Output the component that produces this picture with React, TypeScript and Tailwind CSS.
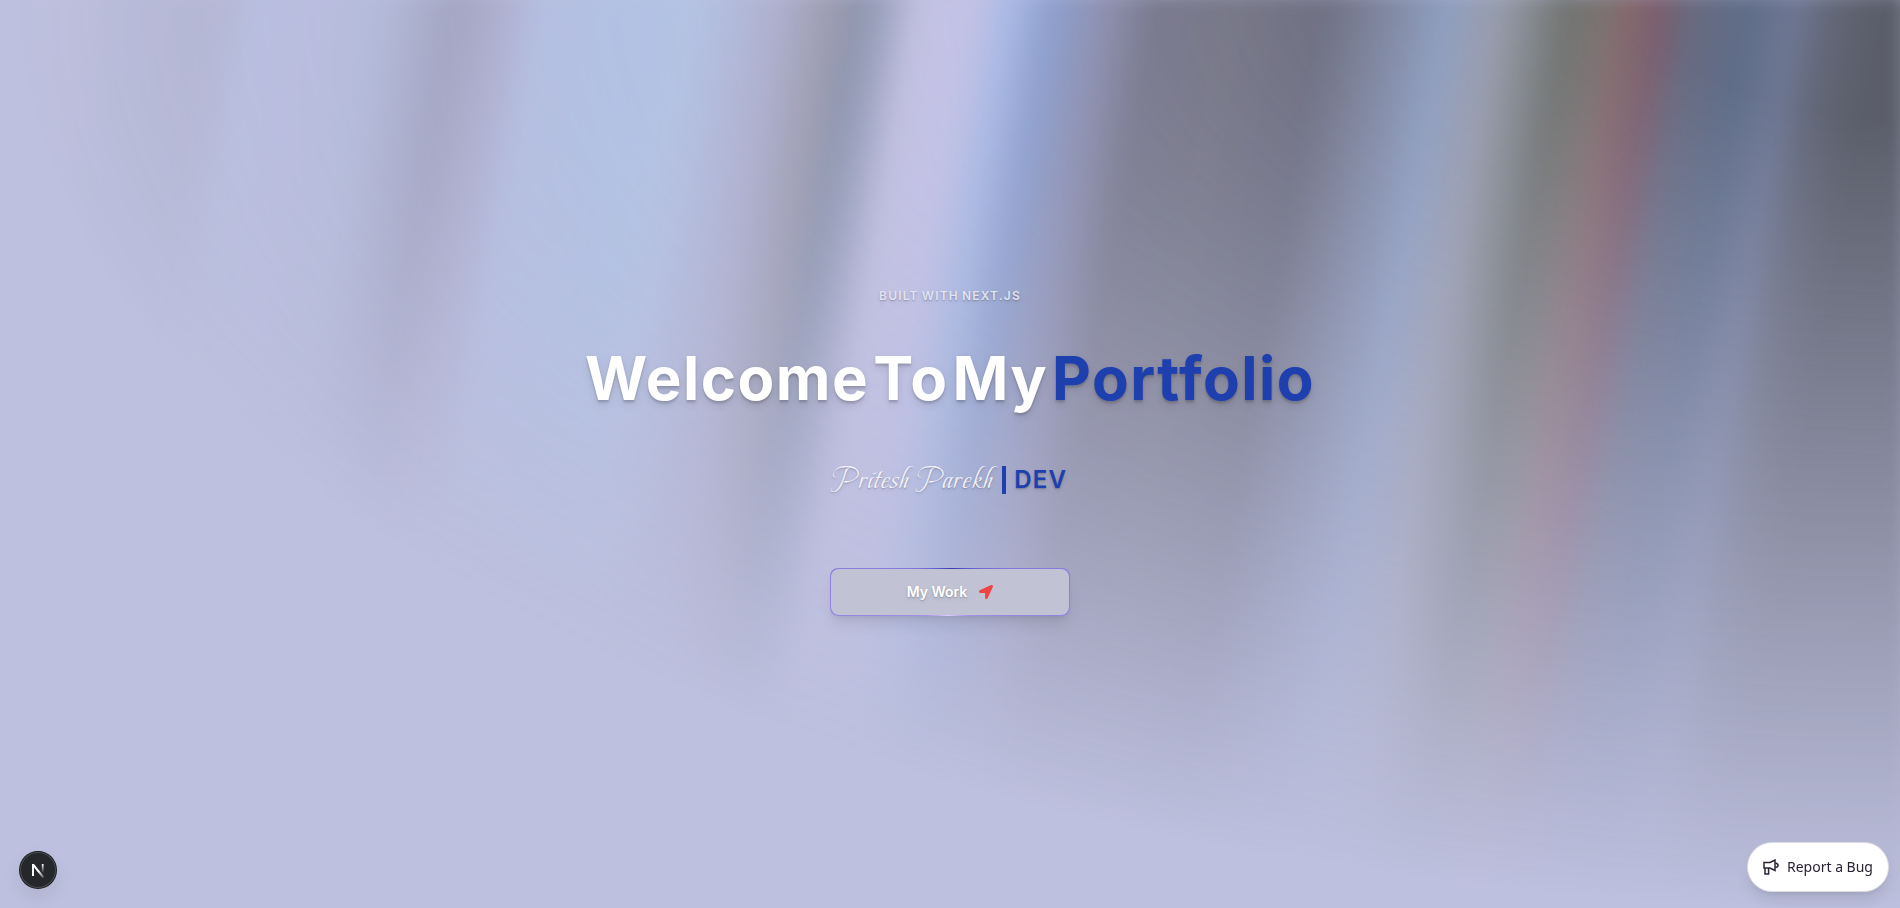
import { FaLocationArrow } from "react-icons/fa";

const aurora =
  "bg-[linear-gradient(100deg,#bdc0de_2%,#bda8b8_4%,#828294_6%,#787a8c_7.7%,#75788d_10.7%,#a1b9e6_13%,#acafe0_15.6%,#98aed0_18.5%,#5f5f78_22.4%,#918daf_24.8%,#a4bde7_26.6%,#a0c5ee_31.9%,#a9c5ea_34%,#9fa0bf_37.8%,#817a86_40.4%,#636e82_41.8%,#818aa4_43%,#c6c0e3_44.7%,#c9c4ea_46%,#c6c3ec_47.3%,#9fb6e8_49%,#758ec6_51%,#777a9a_53.6%,#5f5d6d_56%,#61606c_59.8%,#5d5d6c_64.1%,#737b93_67%,#899abb_70%,#9599a8_72.5%,#808487_74.3%,#6e706d_75.8%,#78716f_77.5%,#84696c_78.6%,#795f6e_80.4%,#686a80_81.9%,#5f6d88_84.5%,#6e7793_86.8%,#636878_88.5%,#5b5e6a_90.6%,#5b5e6a_100%)]";

function AuroraBackground() {
  return (
    <div aria-hidden="true" className="pointer-events-none absolute inset-0 overflow-hidden">
      <div
        className={`absolute -inset-[10px] blur-[10px] [mask-image:radial-gradient(ellipse_at_100%_0%,black_10%,transparent_70%)] ${aurora}`}
      />
    </div>
  );
}

function MegaphoneIcon() {
  return (
    <svg viewBox="0 0 16 16" className="size-4" fill="none" stroke="currentColor" strokeWidth="1.5" aria-hidden="true">
      <path d="M1 3.5h6L12 1v10.5L7 9H1z" />
      <path d="M2 9v6h3.6V9" />
      <path d="M12.5 4c1.6.4 2.6 1.2 2.6 2.3s-1 2-2.6 2.3" />
    </svg>
  );
}

function NextIcon() {
  return (
    <svg viewBox="0 0 36 36" className="size-9" fill="none" aria-hidden="true">
      <defs>
        <linearGradient id="next-diagonal" x1="19" y1="19" x2="24.5" y2="26" gradientUnits="userSpaceOnUse">
          <stop stopColor="#fff" />
          <stop offset="1" stopColor="#fff" stopOpacity="0.1" />
        </linearGradient>
        <linearGradient id="next-stem" x1="23" y1="12" x2="23" y2="21" gradientUnits="userSpaceOnUse">
          <stop stopColor="#fff" />
          <stop offset="1" stopColor="#fff" stopOpacity="0" />
        </linearGradient>
      </defs>
      <path d="M13 12.5l10.500 13" stroke="url(#next-diagonal)" strokeWidth="2" />
      <path d="M13 24V12" stroke="#fff" strokeWidth="2" />
      <path d="M22.7 12v8.5" stroke="url(#next-stem)" strokeWidth="1.8" />
    </svg>
  );
}

export default function App() {
  return (
    <div className="relative flex min-h-screen flex-col items-center justify-center overflow-hidden bg-[#bdc0de] font-['Inter',sans-serif]">
      <AuroraBackground />

      <main className="relative flex flex-col items-center pb-1 text-center text-white">
        <p className="flex gap-x-[3px] text-xs font-semibold tracking-widest text-[#e0e3f2] uppercase text-shadow-md">
          <span>Built</span>
          <span>with</span>
          <span>Next.js</span>
        </p>
        <h1 className="mt-11 flex flex-wrap justify-center gap-x-1 text-6xl font-bold tracking-wide text-shadow-lg">
          <span>Welcome</span>
          <span>To</span>
          <span>My</span>
          <span className="text-[#1e40af]">Portfolio</span>
        </h1>
        <p className="mt-13 flex items-center gap-2 text-2xl font-semibold tracking-wider text-[#1e40af] text-shadow-md">
          <span className="font-['Beau_Rivage','Liberation_Serif',serif] text-3xl leading-10 font-normal tracking-wider text-[#f1f2fa]">
            Pritesh Parekh
          </span>
          <span className="h-7 w-1 bg-[#1e40af]" />
          <span>DEV</span>
        </p>
        <a
          href="#work"
          className="mt-17 flex h-12 w-60 rounded-lg bg-[conic-gradient(from_184deg_at_50%_50%,#e2cbff_0%,#a592e6_12%,#8478da_32%,#393bb2_50%,#8478da_68%,#a592e6_88%,#e2cbff_100%)] p-px shadow-lg"
        >
          <span className="flex flex-1 items-center justify-center gap-3 rounded-lg bg-[#c1c2d4] text-sm font-semibold text-shadow-md">
            My Work
            <FaLocationArrow className="size-3.5 text-[#ef4444]" />
          </span>
        </a>
      </main>

      <button
        type="button"
        aria-label="Open Next.js Dev Tools"
        className="fixed bottom-5 left-5 flex size-9 items-center justify-center rounded-full bg-[#26272b] shadow-[inset_0_0_0_1px_#4a4b50,0_0_0_1px_#1a1a1c,0_8px_20px_rgba(0,0,0,0.08)]"
      >
        <NextIcon />
      </button>

      <button
        type="button"
        className="fixed right-[11px] bottom-4 flex items-center gap-2 rounded-full border border-[#dddbe2] bg-white px-[15px] py-3 font-['Noto_Sans',sans-serif] text-sm leading-6 text-[#2b2233] shadow-lg"
      >
        <MegaphoneIcon />
        Report a Bug
      </button>
    </div>
  );
}
